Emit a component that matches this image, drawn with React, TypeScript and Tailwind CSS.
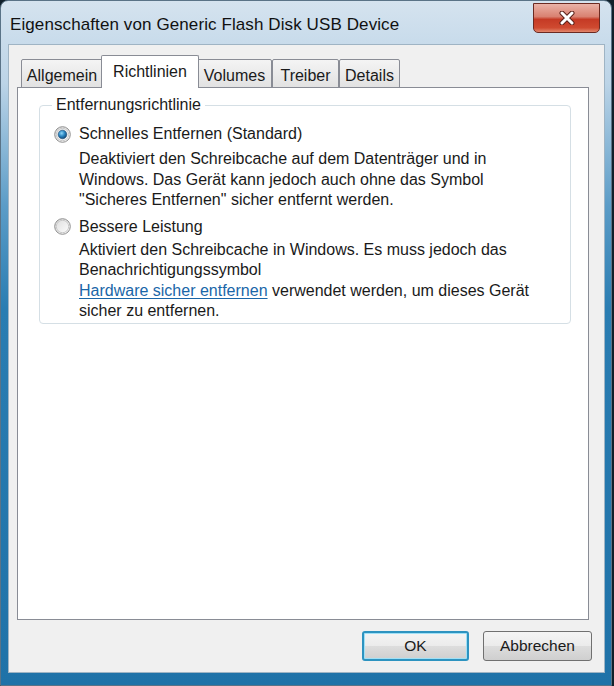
const font = { fontFamily: '"Liberation Sans", Arial, sans-serif' };

function Radio({ checked }: { checked: boolean }) {
  return (
    <svg width="17" height="17" viewBox="0 0 17 17" className="shrink-0">
      <defs>
        <linearGradient id={checked ? 'rb1' : 'rb0'} x1="0" y1="0" x2="1" y2="1">
          <stop offset="0" stopColor="#dcdcdc" />
          <stop offset="1" stopColor="#ffffff" />
        </linearGradient>
        <radialGradient id="dot" cx="0.4" cy="0.35" r="0.7">
          <stop offset="0" stopColor="#8fd6f7" />
          <stop offset="0.5" stopColor="#2a86c2" />
          <stop offset="1" stopColor="#0f3f6a" />
        </radialGradient>
      </defs>
      <circle cx="8.5" cy="8.5" r="7.8" fill={`url(#${checked ? 'rb1' : 'rb0'})`} stroke="#8d8d8d" strokeWidth="1" />
      <circle cx="8.5" cy="8.5" r="6.2" fill="none" stroke="#c9c9c9" strokeWidth="1" />
      {checked && <circle cx="8.5" cy="8.5" r="4.3" fill="url(#dot)" stroke="#1c4e78" strokeWidth="0.6" />}
    </svg>
  );
}

function Tab({ label, width, active }: { label: string; width: string; active?: boolean }) {
  if (active) {
    return (
      <div className={`${width} relative z-10 -mx-[2px] -mb-px h-[33px] flex justify-center pt-[4px] bg-white border border-b-0 border-[#898c95] rounded-t-[2px] text-[16px] text-[#1a1a1a]`}>
        {label}
      </div>
    );
  }
  return (
    <div className={`${width} -mb-px h-[29px] flex justify-center pt-[4px] bg-gradient-to-b from-[#f4f4f4] to-[#e2e2e2] border border-[#898c95] rounded-t-[2px] text-[16px] text-[#1a1a1a]`}>
      {label}
    </div>
  );
}

export default function App() {
  return (
    <div className="w-[614px] h-[686px] bg-[#10202b] overflow-hidden" style={font}>
      <div className="w-[612px] h-[686px] rounded-t-[8px] flex flex-col bg-[linear-gradient(to_bottom,#d5e3ef_0%,#bcd4e7_12%,#5b9cc7_30%,#2a7db2_45%,#1f72a8_100%)] border border-[#5a7387]">
        {/* title bar */}
        <div className="h-[43px] flex items-start justify-between pl-[9px] pr-[11px]">
          <div className="pt-[11px] text-[17px] text-[#111] tracking-[0.1px]">
            Eigenschaften von Generic Flash Disk USB Device
          </div>
          <div className="mt-[2px] w-[67px] h-[30px] rounded-b-[5px] border border-[#6b2a22] bg-[linear-gradient(to_bottom,#eab2a7_0%,#d98171_45%,#c53a25_55%,#cf4a30_85%,#e2876d_100%)] flex items-center justify-center">
            <svg width="16" height="14" viewBox="0 0 16 14">
              <path d="M3 2 L13 12 M13 2 L3 12" stroke="#5b2018" strokeWidth="5" strokeLinecap="round" />
              <path d="M3 2 L13 12 M13 2 L3 12" stroke="#ffffff" strokeWidth="3" strokeLinecap="round" />
            </svg>
          </div>
        </div>

        {/* client area */}
        <div className="ml-[7px] mr-[6px] h-[629px] bg-[#f0f0f0] border border-[#9fb4c4] flex flex-col pl-[8px] pr-[15px]">
          {/* tabs */}
          <div className="flex items-end pl-[4px] pt-[10px] h-[42px]">
            <Tab label="Allgemein" width="w-[82px]" />
            <Tab label="Richtlinien" width="w-[98px]" active />
            <Tab label="Volumes" width="w-[75px]" />
            <Tab label="Treiber" width="w-[67px]" />
            <Tab label="Details" width="w-[61px]" />
          </div>

          {/* panel */}
          <div className="h-[533px] bg-white border border-[#898c95] pl-[21px] pr-[17px] pt-[7px]">
            <fieldset className="border border-[#d5dfe5] rounded-[4px] pl-[14px] pr-[10px] pb-[1px] text-[16px] text-[#1a1a1a]">
              <legend className="-ml-[2px] px-[4px] leading-[20px]">Entfernungsrichtlinie</legend>
              <div className="pt-[9px]">
                <div className="flex items-center gap-[8px] h-[20px]">
                  <Radio checked />
                  <span>Schnelles Entfernen (Standard)</span>
                </div>
                <div className="pl-[25px] mt-[5px] leading-[20.5px]">
                  Deaktiviert den Schreibcache auf dem Datenträger und in
                  <br />
                  Windows. Das Gerät kann jedoch auch ohne das Symbol
                  <br />
                  "Sicheres Entfernen" sicher entfernt werden.
                </div>
                <div className="flex items-center gap-[8px] h-[20px] mt-[6px]">
                  <Radio checked={false} />
                  <span>Bessere Leistung</span>
                </div>
                <div className="pl-[25px] mt-[3px] leading-[20.5px]">
                  Aktiviert den Schreibcache in Windows. Es muss jedoch das
                  <br />
                  Benachrichtigungssymbol
                  <br />
                  <span className="text-[#1a66a8] underline underline-offset-2">Hardware sicher entfernen</span> verwendet werden, um dieses Gerät
                  <br />
                  sicher zu entfernen.
                </div>
              </div>
            </fieldset>
          </div>

          {/* buttons */}
          <div className="flex justify-end gap-[14px] mt-[11px]">
            <button className="w-[107px] h-[30px] rounded-[3px] border-2 border-[#2d93c0] bg-[linear-gradient(to_bottom,#f4f4f4_0%,#ebebeb_50%,#dddddd_51%,#cfcfcf_100%)] text-[15.5px] text-[#1a1a1a] shadow-[inset_0_0_0_1px_#9fe0f6]">
              OK
            </button>
            <button className="w-[109px] h-[30px] rounded-[3px] border border-[#707070] bg-[linear-gradient(to_bottom,#f4f4f4_0%,#ebebeb_50%,#dddddd_51%,#cfcfcf_100%)] text-[15.5px] text-[#1a1a1a] mr-[-3px]">
              Abbrechen
            </button>
          </div>
        </div>
      </div>
    </div>
  );
}
